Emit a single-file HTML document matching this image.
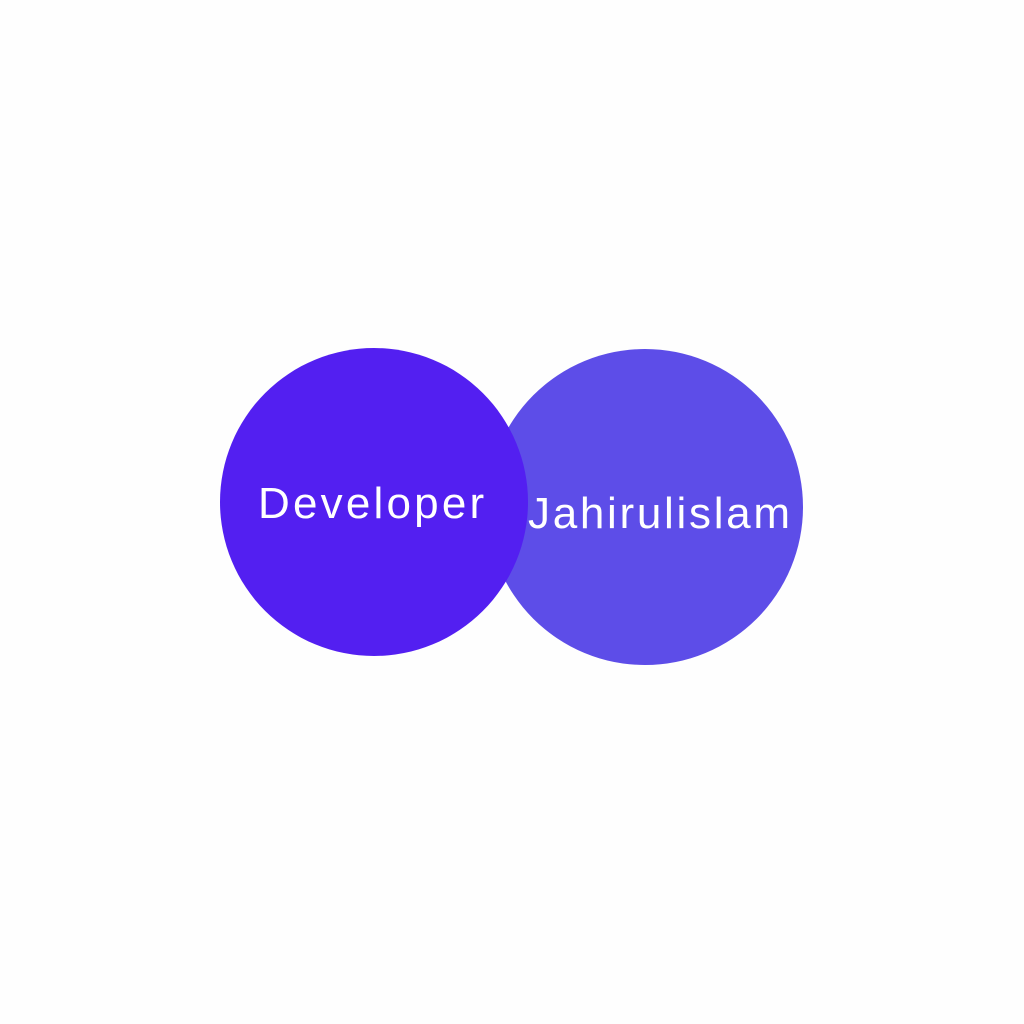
<!DOCTYPE html>
<html><head><style>
html,body{margin:0;padding:0;background:#fefefe;width:1024px;height:1024px;overflow:hidden;position:relative;font-family:"Liberation Sans",sans-serif;}
.c{position:absolute;border-radius:50%;}
.t{position:absolute;color:#fff;font-size:44px;white-space:nowrap;line-height:1;}
</style></head><body>
<div class="c" style="left:487px;top:349px;width:316px;height:316px;background:#5d4de8"></div>
<div class="c" style="left:220px;top:348px;width:308px;height:308px;background:#531ff1"></div>
<div class="t" style="left:258px;top:482px;letter-spacing:3.2px">Developer</div>
<div class="t" style="left:528px;top:492px;letter-spacing:2.7px">Jahirulislam</div>
</body></html>
